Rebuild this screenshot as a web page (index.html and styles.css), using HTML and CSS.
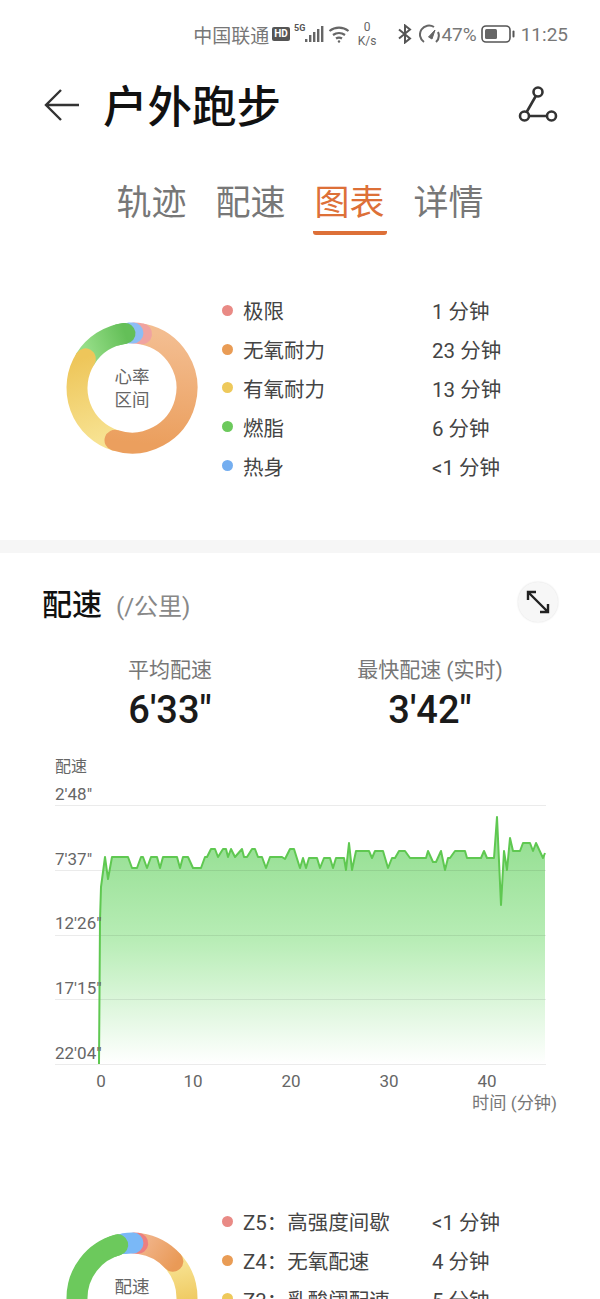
FILE: index.html
```html
<!DOCTYPE html>
<html lang="zh">
<head>
  <meta charset="UTF-8" />
  <meta name="viewport" content="width=device-width, initial-scale=1.0" />
  <title>户外跑步</title>
  <link rel="stylesheet" href="styles.css">
</head>
<body>
  <!-- Status bar -->
  <div class="statusbar">
    <span class="carrier">中国联通</span>
    <span class="hd-badge">HD</span>
    <svg class="icon-signal" width="32" height="24" viewBox="0 0 32 24">
      <text x="0" y="9" class="tiny-5g">5G</text>
      <rect x="11" y="17" width="2.4" height="3" fill="#666"/>
      <rect x="15" y="13" width="2.4" height="7" fill="#666"/>
      <rect x="19" y="10" width="2.4" height="10" fill="#666"/>
      <rect x="23" y="7" width="2.4" height="13" fill="#666"/>
      <rect x="27" y="4" width="2.4" height="16" fill="#666"/>
    </svg>
    <svg class="icon-wifi" width="24" height="20" viewBox="0 0 24 20" fill="none" stroke="#666" stroke-width="2.2">
      <path d="M1.5 7 A15 15 0 0 1 20.5 7"/>
      <path d="M5 11 A10 10 0 0 1 17 11"/>
      <path d="M8 14.5 A5.5 5.5 0 0 1 14 14.5"/>
      <circle cx="11" cy="17.5" r="1.2" fill="#666" stroke="none"/>
    </svg>
    <span class="netspeed"><span>0</span><span>K/s</span></span>
    <svg class="icon-bt" width="16" height="20" viewBox="0 0 16 20" fill="none" stroke="#555" stroke-width="2">
      <path d="M2 5.5 L13 14.5 L8 18.5 V1.5 L13 5.5 L2 14.5"/>
    </svg>
    <svg class="icon-gauge" width="22" height="20" viewBox="0 0 22 20" fill="none" stroke="#666" stroke-width="2">
      <path d="M5 18 A9 9 0 0 1 15 3"/>
      <path d="M19 8 A9 9 0 0 1 17 18"/>
      <path d="M9.5 13 L16 6 L13 15 Z" fill="#666" stroke-width="1"/>
    </svg>
    <span class="battery-text">47%</span>
    <svg class="icon-battery" width="34" height="18" viewBox="0 0 34 18">
      <rect x="1" y="1" width="28" height="16" rx="4" fill="none" stroke="#555" stroke-width="1.6"/>
      <rect x="4" y="4" width="12" height="10" rx="1.5" fill="#666"/>
      <rect x="31.5" y="5.5" width="2" height="7" rx="1" fill="#555"/>
    </svg>
    <span class="clock">11:25</span>
  </div>

  <!-- Header -->
  <div class="header">
    <svg width="36" height="36" viewBox="0 0 36 36" fill="none" stroke="#333" stroke-width="2.4">
      <path d="M35 18 H2 M17 3 L2 18 L17 33"/>
    </svg>
    <h1 class="page-title">户外跑步</h1>
    <svg class="route-icon" width="42" height="40" viewBox="0 0 42 40" fill="none" stroke="#333" stroke-width="2.6">
      <circle cx="20" cy="7" r="4.5"/>
      <circle cx="6.5" cy="31" r="4.5"/>
      <circle cx="33.5" cy="31" r="4.5"/>
      <path d="M17.8 11 L8.7 27 M11 31 H29"/>
    </svg>
  </div>

  <!-- Tabs -->
  <div class="tabs">
    <div class="tab">轨迹</div>
    <div class="tab">配速</div>
    <div class="tab active">图表</div>
    <div class="tab">详情</div>
  </div>

  <!-- Heart rate zones -->
  <div class="zone zone-heart">
    <svg class="donut" width="140" height="140" viewBox="0 0 140 140" fill="none" stroke-width="21" stroke-linecap="round">
      <defs>
        <linearGradient id="hrOrange" gradientUnits="userSpaceOnUse" x1="90" y1="15" x2="80" y2="125">
          <stop offset="0" stop-color="#f3bd90"/>
          <stop offset="1" stop-color="#eb9f5e"/>
        </linearGradient>
        <linearGradient id="hrYellow" gradientUnits="userSpaceOnUse" x1="20" y1="40" x2="45" y2="120">
          <stop offset="0" stop-color="#eec65a"/>
          <stop offset="1" stop-color="#f7e291"/>
        </linearGradient>
        <linearGradient id="hrGreen" gradientUnits="userSpaceOnUse" x1="25" y1="35" x2="65" y2="20">
          <stop offset="0" stop-color="#96de88"/>
          <stop offset="1" stop-color="#64bf58"/>
        </linearGradient>
      </defs>
      <path stroke="url(#hrGreen)" d="M23.36 40.86 A55 55 0 0 1 63.01 15.44"/>
      <path stroke="url(#hrYellow)" d="M53 122.31 A55 55 0 0 1 23.36 40.86"/>
      <path stroke="url(#hrOrange)" d="M81.43 16.2 A55 55 0 1 1 53 122.31"/>
      <path stroke="#f0a3a0" d="M71.92 15.03 A55 55 0 0 1 79.55 15.84"/>
      <path stroke="#8dbdf5" d="M67.12 15.08 A55 55 0 0 1 70.96 15.01"/>
      <path stroke="url(#hrGreen)" d="M55.76 16.87 A55 55 0 0 1 63.01 15.44"/>
      <text x="70" y="65" class="donut-label">心率</text>
      <text x="70" y="88" class="donut-label">区间</text>
    </svg>
    <div class="legend">
      <div class="legend-row"><i class="dot dot-red"></i><span class="legend-name">极限</span><span>1 分钟</span></div>
      <div class="legend-row"><i class="dot dot-orange"></i><span class="legend-name">无氧耐力</span><span>23 分钟</span></div>
      <div class="legend-row"><i class="dot dot-yellow"></i><span class="legend-name">有氧耐力</span><span>13 分钟</span></div>
      <div class="legend-row"><i class="dot dot-green"></i><span class="legend-name">燃脂</span><span>6 分钟</span></div>
      <div class="legend-row"><i class="dot dot-blue"></i><span class="legend-name">热身</span><span>&lt;1 分钟</span></div>
    </div>
  </div>

  <div class="divider"></div>

  <!-- Pace -->
  <div class="pace-head">
    <div>
      <span class="pace-title">配速</span>
      <span class="pace-unit">(/公里)</span>
    </div>
    <div class="expand-btn">
      <svg width="26" height="26" viewBox="0 0 26 26" fill="none" stroke="#222" stroke-width="2.4">
        <path d="M3 3 L23 23 M3 11 V3 H11 M23 15 V23 H15"/>
      </svg>
    </div>
  </div>

  <div class="stats">
    <div>
      <div class="stat-label">平均配速</div>
      <div class="stat-value">6'33"</div>
    </div>
    <div>
      <div class="stat-label">最快配速 (实时)</div>
      <div class="stat-value">3'42"</div>
    </div>
  </div>

  <svg class="chart" width="600" height="370" viewBox="0 750 600 370">
    <defs>
      <linearGradient id="paceFill" gradientUnits="userSpaceOnUse" x1="0" y1="817" x2="0" y2="1064">
        <stop offset="0" stop-color="#8edc8b"/>
        <stop offset="0.5" stop-color="#b8edb6"/>
        <stop offset="1" stop-color="#ffffff"/>
      </linearGradient>
    </defs>
    <path fill="url(#paceFill)" d="M99 1064 L100 920 L101 887 L105 857 L108 879 L112 857 L128 857 L132 868 L137 868 L141 857 L143 857 L147 868 L151 857 L157 857 L160 868 L163 857 L177 857 L180 868 L183 857 L188 857 L193 868 L201 868 L205 857 L207 857 L211 849 L215 849 L218 857 L223 849 L226 849 L228 857 L231 849 L235 857 L242 849 L244 857 L247 857 L252 849 L255 849 L258 857 L262 857 L266 868 L270 857 L282 857 L285 859 L290 849 L294 849 L299 865 L300 868 L303 858 L306 868 L309 858 L317 858 L320 868 L324 858 L330 858 L333 868 L336 858 L344 858 L346 870 L349 843 L352 870 L356 851 L369 851 L372 858 L375 851 L383 851 L388 868 L392 858 L395 858 L399 851 L405 851 L410 858 L426 858 L428 851 L433 862 L436 862 L441 851 L445 870 L448 858 L450 858 L455 851 L465 851 L467 858 L481 858 L484 851 L487 858 L494 858 L497 817 L501 905 L504 851 L507 870 L510 838 L513 851 L520 851 L523 843 L530 843 L533 851 L536 843 L543 858 L545 853 L545 1064 Z"/>
    <g class="grid">
      <line x1="55" x2="546" y1="805.5" y2="805.5"/>
      <line x1="55" x2="546" y1="870.5" y2="870.5"/>
      <line x1="55" x2="546" y1="935.5" y2="935.5"/>
      <line x1="55" x2="546" y1="999.5" y2="999.5"/>
      <line x1="55" x2="546" y1="1064.5" y2="1064.5"/>
    </g>
    <path class="pace-line" d="M99 1064 L100 920 L101 887 L105 857 L108 879 L112 857 L128 857 L132 868 L137 868 L141 857 L143 857 L147 868 L151 857 L157 857 L160 868 L163 857 L177 857 L180 868 L183 857 L188 857 L193 868 L201 868 L205 857 L207 857 L211 849 L215 849 L218 857 L223 849 L226 849 L228 857 L231 849 L235 857 L242 849 L244 857 L247 857 L252 849 L255 849 L258 857 L262 857 L266 868 L270 857 L282 857 L285 859 L290 849 L294 849 L299 865 L300 868 L303 858 L306 868 L309 858 L317 858 L320 868 L324 858 L330 858 L333 868 L336 858 L344 858 L346 870 L349 843 L352 870 L356 851 L369 851 L372 858 L375 851 L383 851 L388 868 L392 858 L395 858 L399 851 L405 851 L410 858 L426 858 L428 851 L433 862 L436 862 L441 851 L445 870 L448 858 L450 858 L455 851 L465 851 L467 858 L481 858 L484 851 L487 858 L494 858 L497 817 L501 905 L504 851 L507 870 L510 838 L513 851 L520 851 L523 843 L530 843 L533 851 L536 843 L543 858 L545 853"/>
    <text x="55" y="772" class="axis-name">配速</text>
    <text x="55" y="800" class="axis-text">2'48"</text>
    <text x="55" y="865" class="axis-text">7'37"</text>
    <text x="55" y="929" class="axis-text">12'26"</text>
    <text x="55" y="994" class="axis-text">17'15"</text>
    <text x="55" y="1059" class="axis-text">22'04"</text>
    <text x="101" y="1087" class="axis-text tick">0</text>
    <text x="193" y="1087" class="axis-text tick">10</text>
    <text x="291" y="1087" class="axis-text tick">20</text>
    <text x="389" y="1087" class="axis-text tick">30</text>
    <text x="487" y="1087" class="axis-text tick">40</text>
    <text x="557" y="1109" class="axis-time">时间 (分钟)</text>
  </svg>

  <!-- Pace zones, runs past the bottom of the screen -->
  <div class="zone zone-pace">
    <svg class="donut" width="140" height="140" viewBox="0 0 140 140" fill="none" stroke-width="21" stroke-linecap="round">
      <defs>
        <linearGradient id="pzOrange" gradientUnits="userSpaceOnUse" x1="85" y1="15" x2="115" y2="35">
          <stop offset="0" stop-color="#f0b184"/>
          <stop offset="1" stop-color="#e99a57"/>
        </linearGradient>
        <linearGradient id="pzYellow" gradientUnits="userSpaceOnUse" x1="115" y1="35" x2="125" y2="80">
          <stop offset="0" stop-color="#f7e291"/>
          <stop offset="1" stop-color="#eec65a"/>
        </linearGradient>
      </defs>
      <path stroke="#6cc95c" d="M15 70 A55 55 0 0 1 55.76 16.87"/>
      <path stroke="url(#pzYellow)" d="M110.87 33.2 A55 55 0 0 1 125 70"/>
      <path stroke="url(#pzOrange)" d="M77.66 15.54 A55 55 0 0 1 110.87 33.2"/>
      <path stroke="#ec7f7f" d="M72 15.04 A55 55 0 0 1 75.75 15.3"/>
      <path stroke="#7ab8f7" d="M62 15.6 A55 55 0 0 1 70.96 15.01"/>
      <path stroke="#6cc95c" d="M50 18.8 A55 55 0 0 1 55.76 16.87"/>
      <text x="70" y="65" class="donut-label">配速</text>
    </svg>
    <div class="legend">
      <div class="legend-row"><i class="dot dot-red"></i><span class="legend-name">Z5：高强度间歇</span><span>&lt;1 分钟</span></div>
      <div class="legend-row"><i class="dot dot-orange"></i><span class="legend-name">Z4：无氧配速</span><span>4 分钟</span></div>
      <div class="legend-row"><i class="dot dot-yellow"></i><span class="legend-name">Z3：乳酸阈配速</span><span>5 分钟</span></div>
    </div>
  </div>
</body>
</html>
```

FILE: styles.css
```css
html, body {
  height: 1299px;
}
body {
  font-family: Roboto, "Noto Sans CJK SC", sans-serif;
  margin: 0;
  padding: 0;
  background-color: #fff;
  color: #444;
  overflow: hidden;
}
.statusbar {
  height: 68px;
  display: flex;
  align-items: center;
  justify-content: flex-end;
  padding-right: 32px;
  color: #777;
  font-size: 19px;
}
.hd-badge {
  background-color: #555;
  color: #fff;
  font-size: 10px;
  font-weight: 700;
  line-height: 14px;
  padding: 0 2px;
  border-radius: 2px;
  margin-left: 3px;
}
.icon-signal {
  margin-left: 4px;
}
.tiny-5g {
  font-size: 9px;
  font-weight: 700;
  fill: #555;
}
.icon-wifi {
  margin-left: 2px;
}
.netspeed {
  display: flex;
  flex-direction: column;
  align-items: center;
  font-size: 12px;
  line-height: 14px;
  margin-left: 6px;
  color: #666;
}
.icon-bt {
  margin-left: 21px;
}
.icon-gauge {
  margin-left: 6px;
}
.icon-battery {
  margin-left: 4px;
}
.clock {
  margin-left: 6px;
}
.header {
  height: 74px;
  display: flex;
  align-items: center;
  padding: 0 40px 0 44px;
}
.page-title {
  font-size: 44.5px;
  font-weight: 500;
  color: #111;
  margin: -4px 0 0 23px;
  flex: 1;
}
.tabs {
  display: flex;
  justify-content: center;
  gap: 29px;
  margin-top: 39px;
}
.tab {
  font-size: 35px;
  line-height: 46px;
  color: #777;
  padding-bottom: 8px;
}
.tab.active {
  color: #dd7038;
  margin: 0 -2px;
  padding: 0 2px 4px;
  border-bottom: 4px solid #dd7038;
  border-radius: 0 0 3px 3px;
}
.zone {
  display: flex;
  padding-left: 62px;
}
.zone-heart {
  align-items: center;
  padding-top: 56px;
  padding-bottom: 55px;
}
.zone-pace {
  align-items: flex-start;
  padding-top: 82px;
}
.zone-pace .donut {
  margin-top: 26px;
}
.donut {
  flex: none;
}
.donut-label {
  font-size: 17.5px;
  fill: #666;
  text-anchor: middle;
}
.legend {
  margin-left: 20px;
  font-size: 20.5px;
}
.legend-row {
  display: flex;
  align-items: center;
  height: 38.8px;
}
.legend-name {
  width: 189px;
}
.dot {
  width: 11px;
  height: 11px;
  border-radius: 50%;
  margin-right: 10px;
}
.dot-red { background-color: #e98a85; }
.dot-orange { background-color: #e99c55; }
.dot-yellow { background-color: #eec95b; }
.dot-green { background-color: #6cc95c; }
.dot-blue { background-color: #74aef0; }
.divider {
  height: 13px;
  background-color: #f6f6f6;
}
.pace-head {
  display: flex;
  justify-content: space-between;
  align-items: center;
  padding: 27px 42px 0 42px;
}
.pace-title {
  font-size: 30px;
  font-weight: 500;
  color: #111;
}
.pace-unit {
  font-size: 24px;
  color: #888;
  margin-left: 10px;
}
.expand-btn {
  width: 40px;
  height: 40px;
  border-radius: 50%;
  background-color: #f7f7f7;
  box-shadow: 0 0 2px rgba(0, 0, 0, 0.15);
  display: flex;
  align-items: center;
  justify-content: center;
}
.stats {
  display: grid;
  grid-template-columns: 258px 262px;
  padding-left: 41px;
  margin-top: 32px;
  text-align: center;
}
.stat-label {
  font-size: 21px;
  line-height: 28px;
  color: #777;
}
.stat-value {
  font-size: 38px;
  font-weight: 500;
  line-height: 52px;
  color: #1a1a1a;
}
.chart {
  display: block;
  margin-top: 14px;
}
.grid line {
  stroke: rgba(0, 0, 0, 0.08);
  stroke-width: 1;
}
.pace-line {
  fill: none;
  stroke: #5fc851;
  stroke-width: 2;
  stroke-linejoin: round;
}
.axis-name {
  font-size: 16px;
  fill: #666;
}
.axis-text {
  font-size: 17px;
  fill: #666;
}
.tick {
  text-anchor: middle;
}
.axis-time {
  font-size: 17.2px;
  fill: #777;
  text-anchor: end;
}
```
